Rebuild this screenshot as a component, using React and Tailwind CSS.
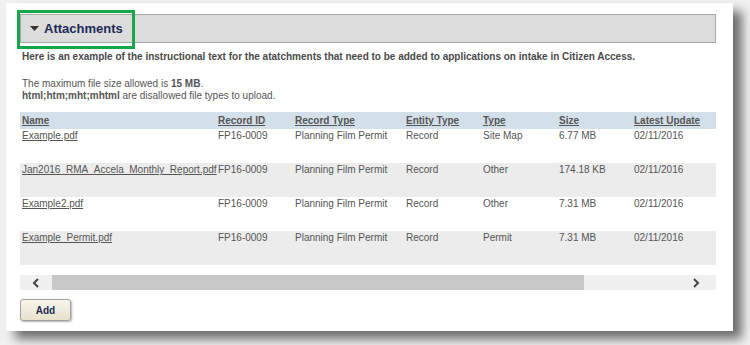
import React from "react";

const cols = "grid grid-cols-[196px_77px_111px_77px_76px_75px_84px]";
const rows = [
  ["Example.pdf", "FP16-0009", "Planning Film Permit", "Record", "Site Map", "6.77 MB", "02/11/2016"],
  ["Jan2016_RMA_Accela_Monthly_Report.pdf", "FP16-0009", "Planning Film Permit", "Record", "Other", "174.18 KB", "02/11/2016"],
  ["Example2.pdf", "FP16-0009", "Planning Film Permit", "Record", "Other", "7.31 MB", "02/11/2016"],
  ["Example_Permit.pdf", "FP16-0009", "Planning Film Permit", "Record", "Permit", "7.31 MB", "02/11/2016"],
];
const heads = ["Name", "Record ID", "Record Type", "Entity Type", "Type", "Size", "Latest Update"];

export default function App() {
  return (
    <div className="w-[750px] h-[345px] overflow-hidden bg-[#f1f1f1] pt-[3px] pl-[6px] font-['Liberation_Sans',Arial,sans-serif] text-[10px] text-[#555]">
      <div className="relative w-[727px] h-[328px] bg-white shadow-[9px_8px_10px_rgba(0,0,0,0.55)] pt-[11px] pl-[14px]">
        <div className="absolute left-[11px] top-[7px] w-[118px] h-[39px] border-[3px] border-[#17a74b]" />
        <div className="w-[696px] h-[29px] bg-[#dcdcdc] border border-[#a9a9a9] flex items-center pl-[9px]">
          <svg width="9" height="6" viewBox="0 0 9 6" className="mr-[5px]">
            <polygon points="0,0 9,0 4.5,5" fill="#333" />
          </svg>
          <span className="font-bold text-[13px] text-[#1d2b55]">Attachments</span>
        </div>
        <div className="pl-[2px] pt-[8px] font-bold text-[#4a4a4a] leading-[12px]">
          Here is an example of the instructional text for the atatchments that need to be added to applications on intake in Citizen Access.
        </div>
        <div className="pl-[2px] pt-[15px] leading-[12px]">
          <div>The maximum file size allowed is <b>15 MB</b>.</div>
          <div><b>html;htm;mht;mhtml</b> are disallowed file types to upload.</div>
        </div>
        <div className="mt-[10px] w-[696px]">
          <div className={`${cols} h-[17px] bg-[#d3e0ea] items-center`}>
            {heads.map((h) => (
              <div key={h} className="pl-[2px] font-bold underline">{h}</div>
            ))}
          </div>
          {rows.map((r, i) => (
            <div key={i} className={`${cols} h-[34px] ${i % 2 ? "bg-[#ececec]" : "bg-white"} pt-[1px]`}>
              {r.map((c, j) => (
                <div key={j} className={`pl-[2px] whitespace-nowrap leading-[12px] ${j === 0 ? "underline" : ""}`}>{c}</div>
              ))}
            </div>
          ))}
        </div>
        <div className="mt-[10px] w-[696px] h-[15px] bg-[#f0f0f0] flex items-center">
          <div className="w-[32px] flex justify-center">
            <svg width="8" height="10" viewBox="0 0 8 10">
              <polyline points="6,1 2,5 6,9" fill="none" stroke="#444" strokeWidth="2" />
            </svg>
          </div>
          <div className="w-[532px] h-[15px] bg-[#c8c8c8]" />
          <div className="flex-1 flex justify-end pr-[16px]">
            <svg width="8" height="10" viewBox="0 0 8 10">
              <polyline points="2,1 6,5 2,9" fill="none" stroke="#444" strokeWidth="2" />
            </svg>
          </div>
        </div>
        <button className="mt-[9px] w-[51px] h-[22px] rounded-[3px] border border-[#a0a0a0] bg-gradient-to-b from-[#f8f6ec] to-[#e8e2cc] shadow-[1px_1px_2px_rgba(0,0,0,0.3)] font-bold text-[10px] text-[#1d2b55]">
          Add
        </button>
      </div>
    </div>
  );
}
